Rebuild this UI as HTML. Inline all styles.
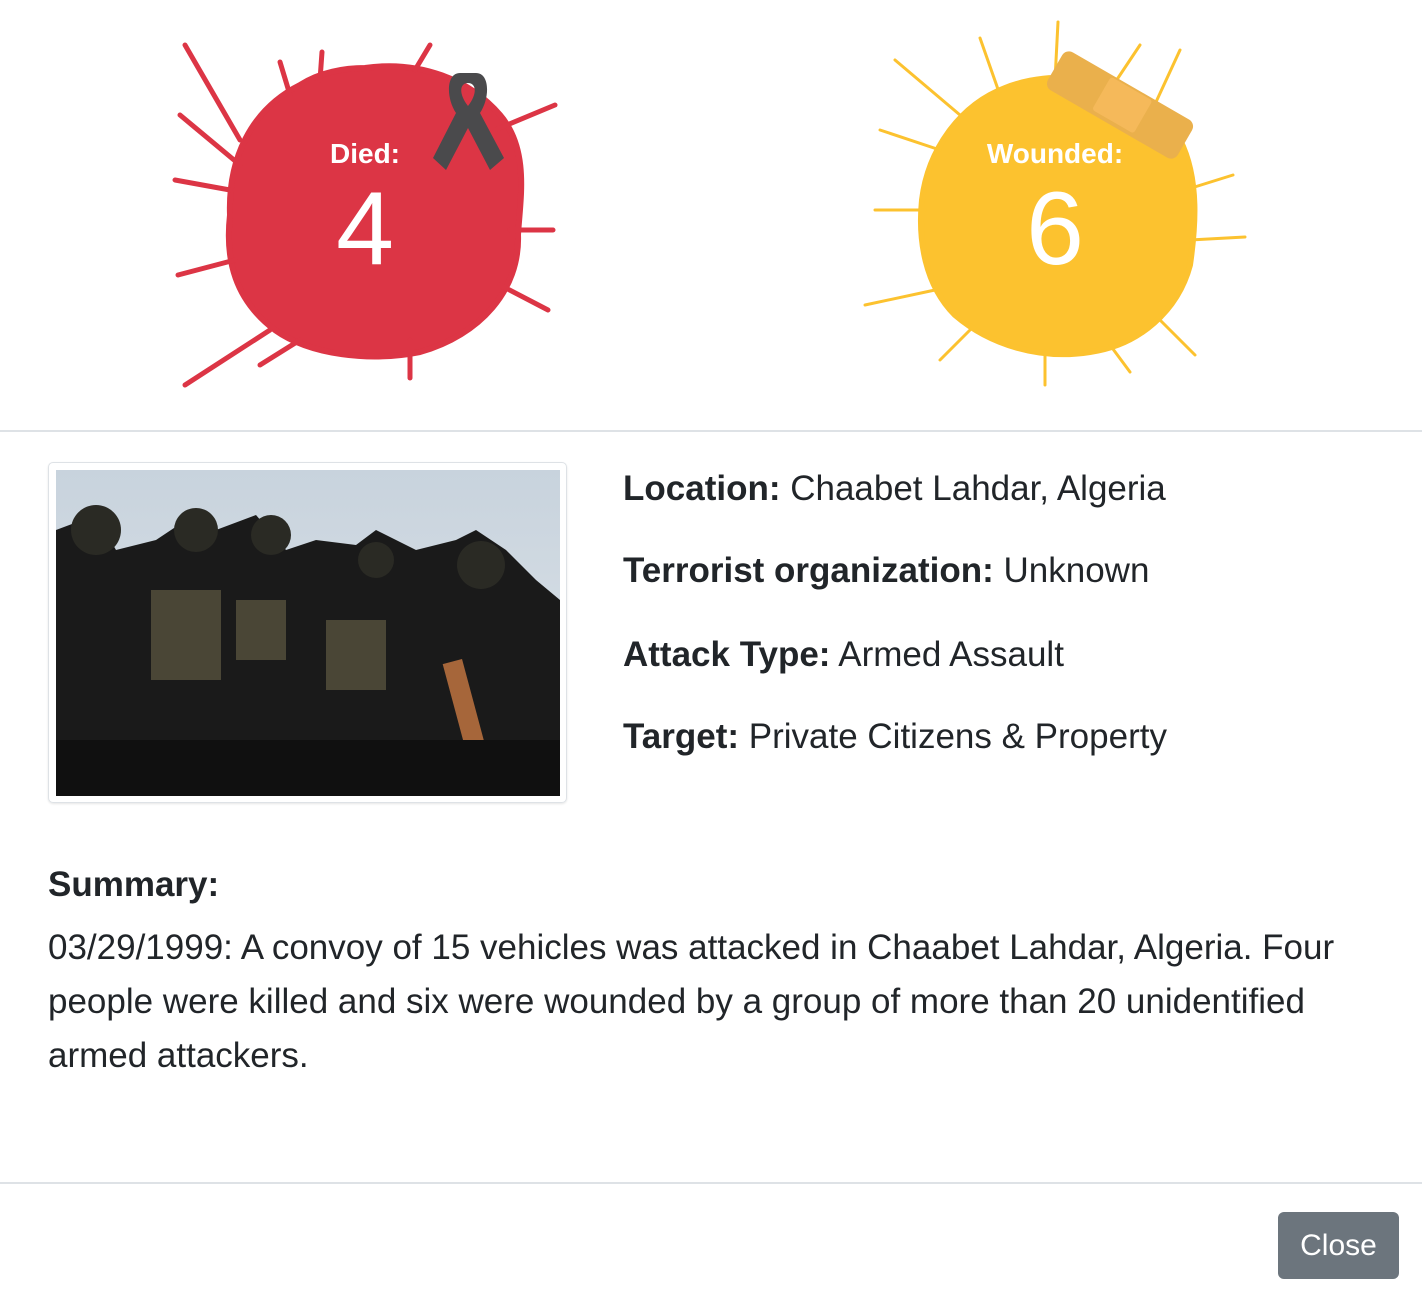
<!DOCTYPE html>
<html><head><meta charset="utf-8"><style>
body{margin:0;width:1422px;height:1303px;background:#fff;font-family:"Liberation Sans",sans-serif;color:#212529;position:relative;overflow:hidden}
.abs{position:absolute}
.hr{position:absolute;left:0;width:1422px;height:2px;background:#dee2e6}
.lbl{position:absolute;color:#fff;font-weight:bold;font-size:28px;text-align:center;width:300px}
.num{position:absolute;color:#fff;font-size:104px;text-align:center;width:300px;font-weight:300}
.row{position:absolute;left:623px;font-size:35px;white-space:nowrap}
.row b{font-weight:bold}
</style></head><body>
<svg class="abs" style="left:0;top:0" width="1422" height="430">
<g fill="#dc3545" stroke="#dc3545" stroke-linecap="round">
<path d="M365 68 C420 60 470 80 500 115 C530 150 520 200 518 235 C520 290 480 335 420 352 C370 362 310 355 275 330 C235 300 225 260 230 215 C228 160 250 110 300 85 C320 72 345 68 365 68Z" stroke-width="6"/>
<g stroke-width="5">
<line x1="240" y1="140" x2="185" y2="45"/><line x1="240" y1="165" x2="180" y2="115"/>
<line x1="230" y1="190" x2="175" y2="180"/><line x1="235" y1="260" x2="178" y2="275"/>
<line x1="270" y1="330" x2="185" y2="385"/><line x1="300" y1="340" x2="260" y2="365"/>
<line x1="410" y1="340" x2="410" y2="378"/><line x1="495" y1="130" x2="555" y2="105"/>
<line x1="510" y1="230" x2="553" y2="230"/><line x1="500" y1="285" x2="548" y2="310"/>
<line x1="320" y1="80" x2="322" y2="52"/><line x1="415" y1="70" x2="430" y2="45"/>
<line x1="290" y1="95" x2="280" y2="62"/></g></g>
<g transform="translate(468,118)">
<path d="M-8 -45 C-22 -45 -22 -20 -12 -5 L-35 40 L-22 52 L0 10 L22 52 L36 40 L12 -5 C22 -20 22 -45 8 -45Z M0 -35 C-8 -35 -10 -25 0 -12 C10 -25 8 -35 0 -35Z" fill="#4a4a4c" fill-rule="evenodd"/>
</g>
<g fill="#fcc22f" stroke="#fcc22f" stroke-linecap="round">
<path d="M1055 78 C1110 72 1160 100 1180 140 C1200 180 1195 230 1190 265 C1178 310 1140 345 1090 352 C1040 360 990 345 955 315 C925 285 918 240 922 200 C928 150 960 105 1005 88 C1020 82 1040 78 1055 78Z" stroke-width="6"/>
<g stroke-width="3">
<line x1="940" y1="150" x2="880" y2="130"/><line x1="925" y1="210" x2="875" y2="210"/>
<line x1="935" y1="290" x2="865" y2="305"/><line x1="970" y1="330" x2="940" y2="360"/>
<line x1="1045" y1="350" x2="1045" y2="385"/><line x1="1110" y1="345" x2="1130" y2="372"/>
<line x1="1160" y1="320" x2="1195" y2="355"/><line x1="1190" y1="240" x2="1245" y2="237"/>
<line x1="1185" y1="190" x2="1233" y2="175"/><line x1="1000" y1="95" x2="980" y2="38"/>
<line x1="1055" y1="80" x2="1058" y2="22"/><line x1="1110" y1="90" x2="1140" y2="45"/>
<line x1="1150" y1="115" x2="1180" y2="50"/><line x1="960" y1="115" x2="895" y2="60"/></g></g>
<g transform="translate(1120,105) rotate(30)">
<rect x="-75" y="-22" width="150" height="44" rx="8" fill="#eab04c"/>
<rect x="-22" y="-20" width="48" height="38" rx="3" fill="#f5b95a"/>
</g>
</svg>
<div class="lbl" style="left:215px;top:138px">Died:</div>
<div class="num" style="left:215px;top:170px">4</div>
<div class="lbl" style="left:905px;top:138px">Wounded:</div>
<div class="num" style="left:905px;top:170px">6</div>
<div class="hr" style="top:430px"></div>
<div class="abs" style="left:48px;top:462px;width:517px;height:339px;border:1px solid #dee2e6;border-radius:5px;box-shadow:0 1px 2px rgba(0,0,0,.1)"></div>
<svg class="abs" style="left:56px;top:470px" width="504" height="326">
<defs><linearGradient id="s" x1="0" y1="0" x2="0" y2="1"><stop offset="0" stop-color="#c8d3dd"/><stop offset="1" stop-color="#dfe5ea"/></linearGradient></defs>
<rect width="504" height="326" fill="url(#s)"/>
<path d="M0 60 L40 45 L60 80 L100 70 L130 50 L160 60 L200 45 L230 80 L260 70 L300 75 L320 60 L360 80 L400 70 L420 60 L450 80 L480 110 L504 130 L504 326 L0 326Z" fill="#1a1a1a"/>
<g fill="#2a2a24"><circle cx="140" cy="60" r="22"/><circle cx="215" cy="65" r="20"/><circle cx="320" cy="90" r="18"/><circle cx="425" cy="95" r="24"/><circle cx="40" cy="60" r="25"/></g>
<g fill="#4a4636"><rect x="95" y="120" width="70" height="90"/><rect x="270" y="150" width="60" height="70"/><rect x="180" y="130" width="50" height="60"/></g>
<rect x="398" y="190" width="20" height="90" fill="#a6663a" transform="rotate(-15 408 235)"/>
<rect x="0" y="270" width="504" height="56" fill="#101010"/>
</svg>
<div class="row" style="top:469px"><b>Location:</b> Chaabet Lahdar, Algeria</div>
<div class="row" style="top:551px"><b>Terrorist organization:</b> Unknown</div>
<div class="row" style="top:635px"><b>Attack Type:</b> Armed Assault</div>
<div class="row" style="top:717px"><b>Target:</b> Private Citizens &amp; Property</div>
<div class="abs" style="left:48px;top:865px;font-size:35px;font-weight:bold">Summary:</div>
<div class="abs" style="left:48px;top:921px;width:1340px;font-size:35px;line-height:54px">03/29/1999: A convoy of 15 vehicles was attacked in Chaabet Lahdar, Algeria. Four people were killed and six were wounded by a group of more than 20 unidentified armed attackers.</div>
<div class="hr" style="top:1182px"></div>
<div class="abs" style="left:1278px;top:1212px;width:121px;height:67px;background:#6c757d;border-radius:6px;color:#fff;font-size:30px;line-height:67px;text-align:center">Close</div>
</body></html>
